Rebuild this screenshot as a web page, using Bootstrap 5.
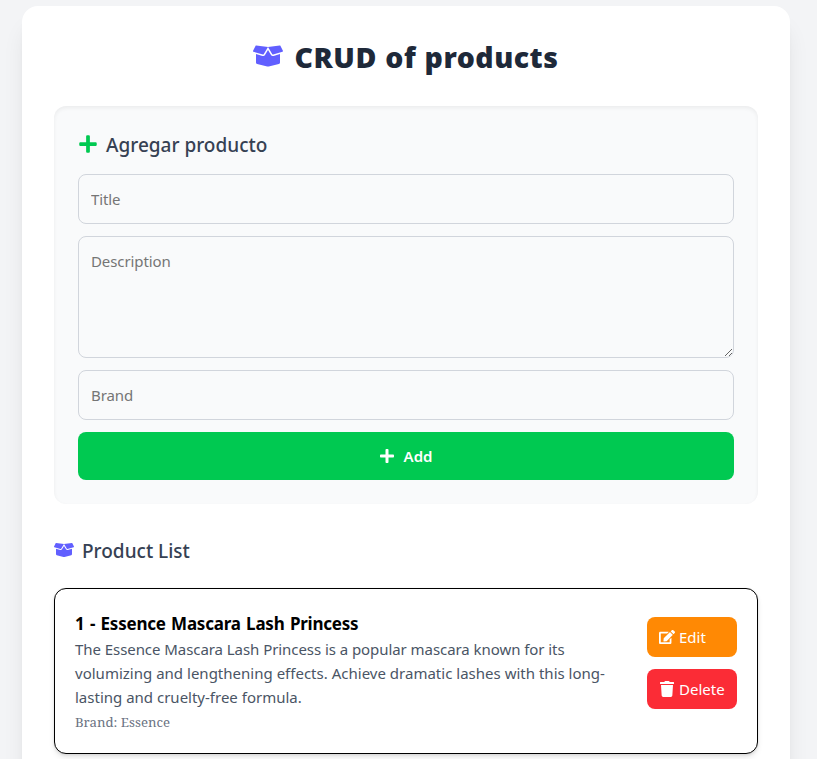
<!DOCTYPE html>
<html lang="es">
<head>
<meta charset="utf-8">
<meta name="viewport" content="width=device-width, initial-scale=1">
<title>CRUD of products</title>
<link href="https://cdn.jsdelivr.net/npm/bootstrap@5.3.0/dist/css/bootstrap.min.css" rel="stylesheet">
<style>
html{overflow:hidden}
body{background:#f3f4f6;font-family:"Noto Sans","Open Sans",sans-serif;font-size:15px;line-height:24px;color:#000;height:759px;overflow:hidden;white-space:nowrap}
svg{fill:currentColor;flex:none;display:block}
.panel{width:768px;margin:6px 0 0 22px;padding:32px;border-radius:16px;height:900px;box-shadow:0 20px 25px -5px rgba(0,0,0,.1),0 8px 10px -6px rgba(0,0,0,.1)}
.indigo{color:#615fff}
.green{color:#00c951}
.page-title{font-size:28.5px;font-weight:900;line-height:36px;letter-spacing:.5px;word-spacing:.5px;color:#1e2939;gap:12px;margin-bottom:32px;padding-right:1px}
.page-title span{padding-top:1px;margin-bottom:-1px}
.sub-title span{padding-top:2px;line-height:26px}
.form-box{background:#f9fafb;border-radius:12px;box-shadow:inset 0 2px 4px rgba(0,0,0,.06);margin-bottom:32px}
.sub-title{font-size:19px;font-weight:500;line-height:28px;color:#364153}
.fields{gap:12px}
.form-box .form-control{background:transparent;border:1px solid #d1d5dc;border-radius:8px;padding:12px;font-size:15px;line-height:24px;height:50px;letter-spacing:-.1px}
.form-box textarea.form-control{height:122px;display:block}
.form-control::placeholder{color:#757575;opacity:1}
.btn-add{background:#00c951;color:#fff;height:48px;border-radius:8px;font-weight:600;font-size:15px;gap:9px;padding-right:13px}
.product{border:1px solid #000;border-radius:12px;padding:20px;height:166px;box-shadow:0 1px 3px rgba(0,0,0,.1),0 4px 6px -1px rgba(0,0,0,.1)}
.product-name{font-size:17px;font-weight:700;line-height:26px;padding-top:2px;letter-spacing:-.22px;word-spacing:1.2px}
.desc{color:#4a5565}
.desc .l-one{letter-spacing:-.06px}
.desc .l-two{letter-spacing:.01px}
.brand{font-family:"Noto Serif","Liberation Serif",serif;font-size:13.2px;color:#6a7282;padding-top:1px}
.actions{gap:12px;width:90px}
.btn-act{height:40px;border-radius:8px;color:#fff;padding:0 12px;gap:4px;font-size:15px}
.edit{background:#ff8904}
.del{background:#fb2c36}
</style>
<script src="https://cdn.jsdelivr.net/npm/bootstrap@5.3.0/dist/js/bootstrap.bundle.min.js"></script>
</head>
<body>
<svg width="0" height="0" class="d-none">
<symbol id="box" viewBox="0 0 640 512"><path d="M425.7 256c-16.9 0-32.8-9-41.4-23.4L320 126l-64.2 106.6c-8.7 14.5-24.6 23.5-41.5 23.5-4.5 0-9-.6-13.3-1.9L64 215v178c0 14.7 10 27.5 24.2 31l216.2 54.1c10.2 2.5 20.9 2.5 31 0L551.8 424c14.2-3.6 24.2-16.4 24.2-31V215l-137 39.1c-4.3 1.3-8.8 1.9-13.3 1.9zm212.6-112.2L586.8 41c-3.1-6.2-9.8-9.8-16.7-8.9L320 64l91.7 152.1c3.8 6.3 11.4 9.3 18.5 7.3l197.9-56.5c9.9-2.9 14.7-13.9 10.2-23.1zM53.2 41L1.7 143.8c-4.6 9.2.3 20.2 10.1 23l197.9 56.5c7.1 2 14.7-1 18.5-7.3L320 64 69.8 32.1c-6.9-.8-13.5 2.7-16.6 8.9z"/></symbol>
<symbol id="plus" viewBox="0 0 448 512"><path d="M416 208H272V64c0-17.67-14.33-32-32-32h-32c-17.67 0-32 14.33-32 32v144H32c-17.67 0-32 14.33-32 32v32c0 17.67 14.33 32 32 32h144v144c0 17.67 14.33 32 32 32h32c17.67 0 32-14.33 32-32V304h144c17.67 0 32-14.33 32-32v-32c0-17.67-14.33-32-32-32z"/></symbol>
<symbol id="pen" viewBox="0 0 576 512"><path d="M402.6 83.2l90.2 90.2c3.8 3.8 3.8 10 0 13.8L274.4 405.6l-92.8 10.3c-12.4 1.4-22.9-9.1-21.5-21.5l10.3-92.8L388.8 83.2c3.8-3.8 10-3.8 13.8 0zm162-22.9l-48.8-48.8c-15.2-15.2-39.9-15.2-55.2 0l-35.4 35.4c-3.8 3.8-3.8 10 0 13.8l90.2 90.2c3.8 3.8 10 3.8 13.8 0l35.4-35.4c15.2-15.3 15.2-40 0-55.2zM384 346.2V448H64V128h229.8c3.2 0 6.2-1.3 8.5-3.5l40-40c7.6-7.6 2.2-20.5-8.5-20.5H48C21.5 64 0 85.5 0 112v352c0 26.5 21.5 48 48 48h352c26.5 0 48-21.5 48-48V306.2c0-10.7-12.9-16-20.5-8.5l-40 40c-2.2 2.3-3.5 5.3-3.5 8.5z"/></symbol>
<symbol id="trash" viewBox="0 0 448 512"><path d="M432 32H312l-9.4-18.7A24 24 0 0 0 281.1 0H166.8a23.72 23.72 0 0 0-21.4 13.3L136 32H16A16 16 0 0 0 0 48v32a16 16 0 0 0 16 16h416a16 16 0 0 0 16-16V48a16 16 0 0 0-16-16zM53.2 467a48 48 0 0 0 47.9 45h245.8a48 48 0 0 0 47.9-45L416 128H32z"/></symbol>
</svg>
<div class="d-flow-root overflow-hidden h-100">
<main class="panel bg-white">
  <h1 class="page-title d-flex justify-content-center align-items-center"><svg class="indigo" width="30" height="30"><use href="#box"/></svg><span>CRUD of products</span></h1>
  <form class="form-box p-4">
    <h2 class="sub-title d-flex align-items-center gap-2 mb-3"><svg class="green" width="20" height="20"><use href="#plus"/></svg><span>Agregar producto</span></h2>
    <div class="fields d-flex flex-column">
      <input class="form-control" type="text" placeholder="Title">
      <textarea class="form-control" placeholder="Description"></textarea>
      <input class="form-control" type="text" placeholder="Brand">
      <button type="button" class="btn btn-add border-0 w-100 d-flex align-items-center justify-content-center"><svg width="16" height="16"><use href="#plus"/></svg><span>Add</span></button>
    </div>
  </form>
  <h2 class="sub-title d-flex align-items-center gap-2 mb-4"><svg class="indigo" width="20" height="20"><use href="#box"/></svg><span>Product List</span></h2>
  <article class="product bg-white d-flex justify-content-between align-items-start">
    <div>
      <h3 class="product-name m-0">1 - Essence Mascara Lash Princess</h3>
      <p class="desc m-0"><span class="l-one">The Essence Mascara Lash Princess is a popular mascara known for its</span><br><span class="l-two">volumizing and lengthening effects. Achieve dramatic lashes with this long-</span><br>lasting and cruelty-free formula.</p>
      <p class="brand m-0">Brand: Essence</p>
    </div>
    <div class="actions d-flex flex-column mt-2">
      <button type="button" class="btn btn-act edit border-0 d-flex align-items-center"><svg width="16" height="16"><use href="#pen"/></svg><span>Edit</span></button>
      <button type="button" class="btn btn-act del border-0 d-flex align-items-center"><svg width="16" height="16"><use href="#trash"/></svg><span>Delete</span></button>
    </div>
  </article>
</main>
</div>
</body>
</html>
